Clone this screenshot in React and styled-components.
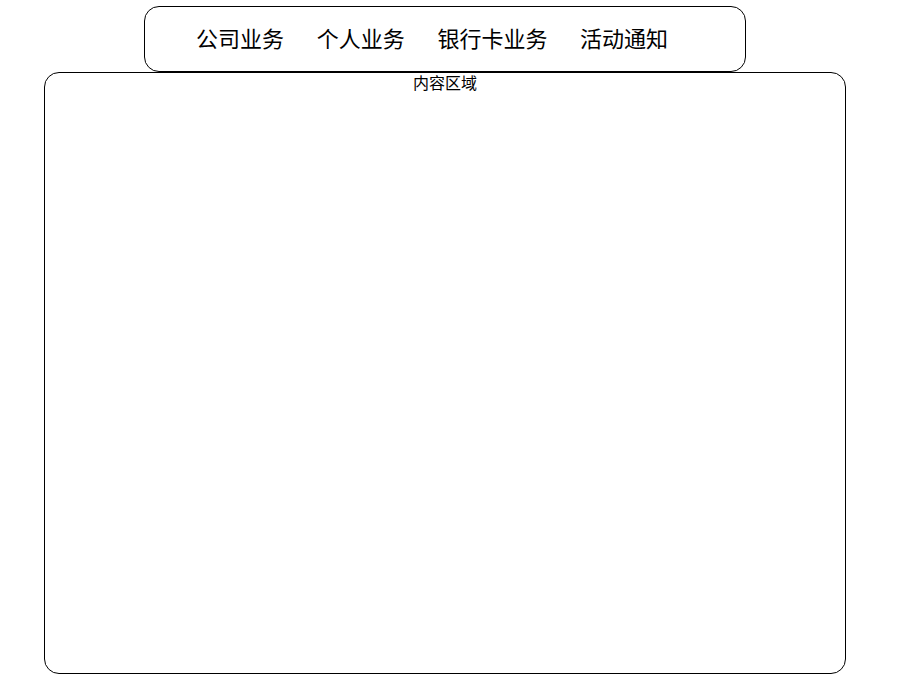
import React from "react";
import styled, { createGlobalStyle } from "styled-components";

const GlobalStyle = createGlobalStyle`
  html, body {
    margin: 0;
    padding: 0;
    background: #ffffff;
    font-family: "Noto Sans CJK SC", "Noto Sans", sans-serif;
    color: #000;
  }
`;

const Page = styled.div`
  width: 890px;
  display: flex;
  flex-direction: column;
  align-items: center;
  padding-top: 6px;
`;

const Nav = styled.nav`
  box-sizing: border-box;
  width: 602px;
  height: 66px;
  border: 1px solid #000;
  border-radius: 15px;
  display: flex;
  align-items: center;
  gap: 32.7px;
  padding-left: 51px;
  padding-bottom: 4px;
`;

const NavItem = styled.a`
  font-size: 22px;
  color: #000;
  text-decoration: none;
  line-height: 1;
  cursor: pointer;
`;

const Content = styled.main`
  box-sizing: border-box;
  width: 802px;
  height: 602px;
  border: 1px solid #000;
  border-radius: 15px;
  text-align: center;
  font-size: 16px;
  line-height: 19px;
`;

const items = ["公司业务", "个人业务", "银行卡业务", "活动通知"];

export default function App() {
  return (
    <>
      <GlobalStyle />
      <Page>
        <Nav>
          {items.map((t) => (
            <NavItem key={t}>{t}</NavItem>
          ))}
        </Nav>
        <Content>内容区域</Content>
      </Page>
    </>
  );
}
